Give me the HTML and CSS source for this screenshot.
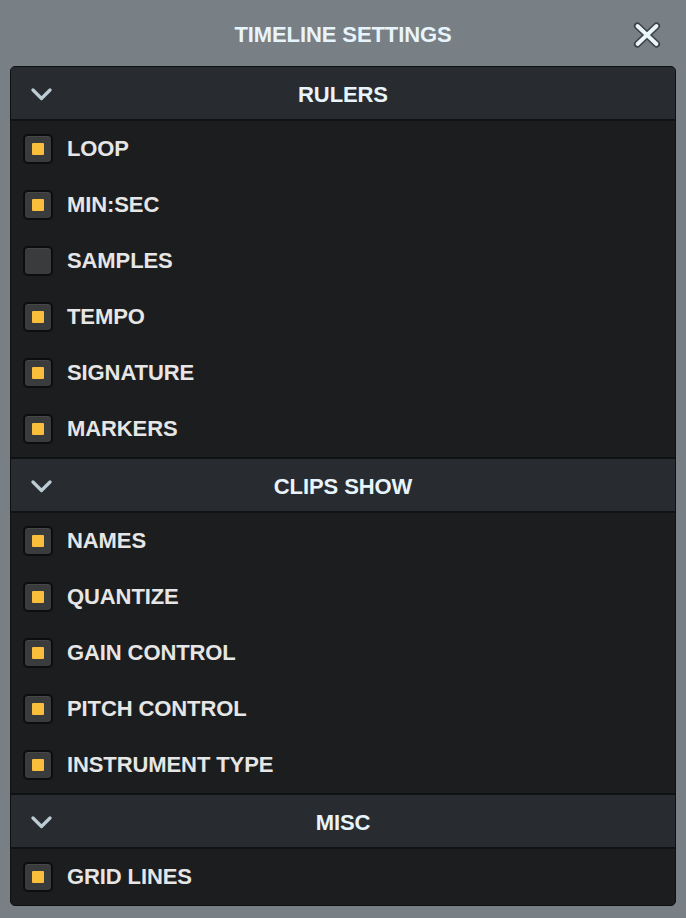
FILE: index.html
```html
<!DOCTYPE html>
<html lang="en">
<head>
  <meta charset="UTF-8" />
  <meta name="viewport" content="width=device-width, initial-scale=1.0" />
  <title>Timeline Settings</title>
  <link rel="stylesheet" href="styles.css">
</head>
<body>
  <div class="titlebar">
    <span></span>
    <h1>TIMELINE SETTINGS</h1>
    <button class="close-btn" aria-label="Close">
      <svg width="28" height="26" viewBox="0 0 28 26">
        <path d="M4.5 4 L23.5 22 M23.5 4 L4.5 22" stroke="#3c4248" stroke-width="7.2" stroke-linecap="round" fill="none"/>
        <path d="M4.5 4 L23.5 22 M23.5 4 L4.5 22" stroke="#eaf5fc" stroke-width="3.8" stroke-linecap="round" fill="none"/>
      </svg>
    </button>
  </div>

  <div class="panel">
    <!-- Rulers -->
    <div class="section">
      <div class="section-head">
        <svg class="chevron" width="21" height="13" viewBox="0 0 21 13"><polyline points="2,2 10.5,10.5 19,2" /></svg>
        <h2>RULERS</h2>
      </div>
      <div class="row"><span class="check on"><i></i></span><span class="label">LOOP</span></div>
      <div class="row"><span class="check on"><i></i></span><span class="label">MIN:SEC</span></div>
      <div class="row"><span class="check"><i></i></span><span class="label">SAMPLES</span></div>
      <div class="row"><span class="check on"><i></i></span><span class="label">TEMPO</span></div>
      <div class="row"><span class="check on"><i></i></span><span class="label">SIGNATURE</span></div>
      <div class="row"><span class="check on"><i></i></span><span class="label">MARKERS</span></div>
    </div>

    <!-- Clips show -->
    <div class="section">
      <div class="section-head">
        <svg class="chevron" width="21" height="13" viewBox="0 0 21 13"><polyline points="2,2 10.5,10.5 19,2" /></svg>
        <h2>CLIPS SHOW</h2>
      </div>
      <div class="row"><span class="check on"><i></i></span><span class="label">NAMES</span></div>
      <div class="row"><span class="check on"><i></i></span><span class="label">QUANTIZE</span></div>
      <div class="row"><span class="check on"><i></i></span><span class="label">GAIN CONTROL</span></div>
      <div class="row"><span class="check on"><i></i></span><span class="label">PITCH CONTROL</span></div>
      <div class="row"><span class="check on"><i></i></span><span class="label">INSTRUMENT TYPE</span></div>
    </div>

    <!-- Misc -->
    <div class="section">
      <div class="section-head">
        <svg class="chevron" width="21" height="13" viewBox="0 0 21 13"><polyline points="2,2 10.5,10.5 19,2" /></svg>
        <h2>MISC</h2>
      </div>
      <div class="row"><span class="check on"><i></i></span><span class="label">GRID LINES</span></div>
    </div>
  </div>
</body>
</html>
```

FILE: styles.css
```css
* { box-sizing: border-box; margin: 0; padding: 0; }
html, body { height: 100%; }
body { font-family: "Liberation Sans", Arial, sans-serif; font-weight: bold; background: #787f85; color: #e6e6e6; padding: 0 10px 13px; }
.titlebar { height: 66px; display: grid; grid-template-columns: 1fr auto 1fr; align-items: center; padding-top: 3px; }
.titlebar h1 { font-size: 22px; color: #e8f4fc; line-height: 1; letter-spacing: -0.1px; }
.close-btn { justify-self: end; margin-right: 15px; background: none; border: none; cursor: pointer; display: flex; }
.panel { background: #1c1d1f; border: 1px solid #0f1011; border-radius: 5px; overflow: hidden; }
.section-head { height: 54px; padding-top: 3px; display: grid; grid-template-columns: 64px 1fr 64px; align-items: center; background: #282c30; border-bottom: 2px solid #111213; }
.section + .section .section-head { border-top: 2px solid #111213; height: 56px; }
.section-head h2 { font-size: 22px; color: #e8f4fc; text-align: center; line-height: 1; letter-spacing: -0.1px; }
.chevron { margin-left: 20px; fill: none; stroke: #bccbd4; stroke-width: 3.2; stroke-linecap: round; stroke-linejoin: round; }
.row { height: 56px; display: flex; align-items: center; padding-left: 12px; gap: 14px; }
.row .label { font-size: 22px; line-height: 1; letter-spacing: -0.1px; }
.check { width: 30px; height: 30px; border: 2px solid #0c0d0e; border-radius: 5px; background: #3a3b3c; display: flex; align-items: center; justify-content: center; box-shadow: inset 0 1px 0 rgba(255,255,255,0.06); }
.check i { width: 12px; height: 12px; border-radius: 1px; background: transparent; }
.check.on i { background: #f9bf3c; }
```
